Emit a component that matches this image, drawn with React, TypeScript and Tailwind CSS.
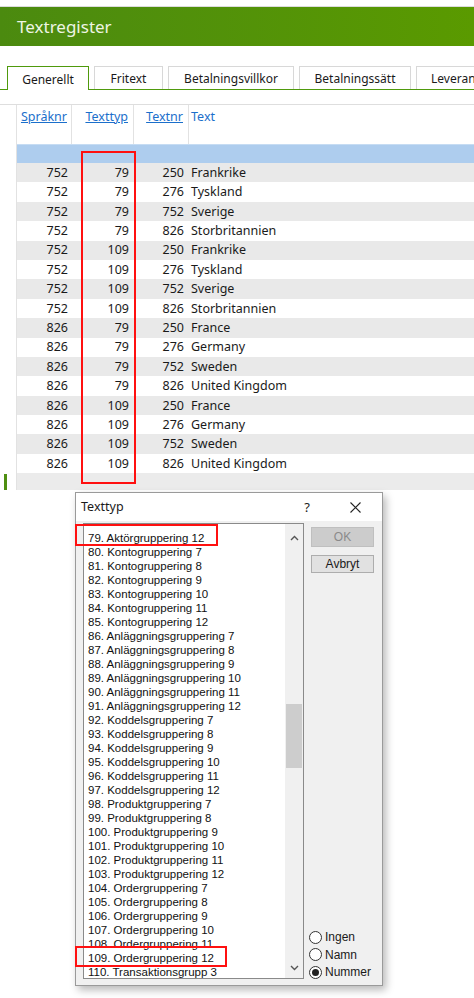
import React from 'react';

const rows: [number, number, number, string][] = [
  [752, 79, 250, 'Frankrike'],
  [752, 79, 276, 'Tyskland'],
  [752, 79, 752, 'Sverige'],
  [752, 79, 826, 'Storbritannien'],
  [752, 109, 250, 'Frankrike'],
  [752, 109, 276, 'Tyskland'],
  [752, 109, 752, 'Sverige'],
  [752, 109, 826, 'Storbritannien'],
  [826, 79, 250, 'France'],
  [826, 79, 276, 'Germany'],
  [826, 79, 752, 'Sweden'],
  [826, 79, 826, 'United Kingdom'],
  [826, 109, 250, 'France'],
  [826, 109, 276, 'Germany'],
  [826, 109, 752, 'Sweden'],
  [826, 109, 826, 'United Kingdom'],
];

const items = [
  '79. Aktörgruppering 12',
  '80. Kontogruppering 7',
  '81. Kontogruppering 8',
  '82. Kontogruppering 9',
  '83. Kontogruppering 10',
  '84. Kontogruppering 11',
  '85. Kontogruppering 12',
  '86. Anläggningsgruppering 7',
  '87. Anläggningsgruppering 8',
  '88. Anläggningsgruppering 9',
  '89. Anläggningsgruppering 10',
  '90. Anläggningsgruppering 11',
  '91. Anläggningsgruppering 12',
  '92. Koddelsgruppering 7',
  '93. Koddelsgruppering 8',
  '94. Koddelsgruppering 9',
  '95. Koddelsgruppering 10',
  '96. Koddelsgruppering 11',
  '97. Koddelsgruppering 12',
  '98. Produktgruppering 7',
  '99. Produktgruppering 8',
  '100. Produktgruppering 9',
  '101. Produktgruppering 10',
  '102. Produktgruppering 11',
  '103. Produktgruppering 12',
  '104. Ordergruppering 7',
  '105. Ordergruppering 8',
  '106. Ordergruppering 9',
  '107. Ordergruppering 10',
  '108. Ordergruppering 11',
  '109. Ordergruppering 12',
  '110. Transaktionsgrupp 3',
];

const tabs = ['Fritext', 'Betalningsvillkor', 'Betalningssätt', 'Leveran'];
const tabWidths = ['w-[69px]', 'w-[126px]', 'w-[112px]', 'w-[80px]'];

function Radio({ label, checked }: { label: string; checked?: boolean }) {
  return (
    <div className="flex items-center gap-[3px] h-[17.5px]">
      <div className="w-[13px] h-[13px] rounded-full border border-[#333] bg-white flex items-center justify-center">
        {checked && <div className="w-[7px] h-[7px] rounded-full bg-[#222]" />}
      </div>
      <span>{label}</span>
    </div>
  );
}

export default function App() {
  return (
    <div className="relative w-[474px] h-[998px] overflow-hidden bg-white text-[#1a1a1a] font-['Noto_Sans',sans-serif]">
      {/* Header */}
      <div className="h-[7px] border-b border-[#dcdcdc]" />
      <div className="h-[39px] flex items-center pl-[17px] bg-gradient-to-r from-[#4b8a0f] to-[#5a9a00] text-[#eef5e4] text-[17px]">
        Textregister
      </div>

      {/* Tabs */}
      <div className="mt-[20px] flex items-end h-[24px] text-[12px] overflow-hidden">
        <div className="w-[7px] shrink-0 h-full border-b border-[#4f9a0c]" />
        <div className="w-[82px] shrink-0 h-[25px] -mb-px pt-[2px] border border-b-0 border-[#4f9a0c] bg-white flex items-center justify-center">
          Generellt
        </div>
        <div className="flex-1 min-w-0 flex items-end h-full border-b border-[#4f9a0c] gap-[5px] pl-[5px]">
          {tabs.map((t, i) => (
            <div
              key={t}
              className={`${tabWidths[i]} shrink-0 h-full pt-[2px] border border-b-0 border-[#d8d8d8] flex items-center ${i === 3 ? 'justify-start pl-[14px]' : 'justify-center'}`}
            >
              {t}
            </div>
          ))}
        </div>
      </div>

      {/* Grid */}
      <div className="mt-[14px] border-t border-[#dedede] text-[12.5px]">
        <div className="flex h-[39px]">
          <div className="w-[17px] border-r border-[#e2e2e2]" />
          <div className="w-[55px] border-r border-[#e2e2e2] text-right pr-[4px] pt-[3px] text-[#1b6fcb] underline">Språknr</div>
          <div className="w-[62px] border-r border-[#e2e2e2] text-right pr-[5px] pt-[3px] text-[#1b6fcb] underline">Texttyp</div>
          <div className="w-[55px] border-r border-[#e2e2e2] text-right pr-[5px] pt-[3px] text-[#1b6fcb] underline">Textnr</div>
          <div className="flex-1 pl-[2px] pt-[3px] text-[#1b6fcb]">Text</div>
        </div>
        <div className="flex h-[19px]">
          <div className="w-[17px] border-r border-[#e2e2e2]" />
          <div className="flex-1 bg-[#aecdee] border-t border-[#c6dcf3]" />
        </div>
        {rows.map((r, i) => (
          <div key={i} className="flex h-[19.4px] items-center">
            <div className="w-[17px] h-full border-r border-[#e2e2e2] bg-white" />
            <div className={`flex-1 h-full flex items-center pt-px ${i % 2 === 0 ? 'bg-[#e9e9e9]' : 'bg-white'}`}>
              <div className="w-[55px] text-right pr-[4px]">{r[0]}</div>
              <div className="w-[62px] text-right pr-[5px]">{r[1]}</div>
              <div className="w-[55px] text-right pr-[5px]">{r[2]}</div>
              <div className="flex-1 pl-[2px]">{r[3]}</div>
            </div>
          </div>
        ))}
        <div className="flex h-[17px] bg-[#ebebeb]">
          <div className="w-[17px] bg-white border-r border-[#e2e2e2] pl-[4px] pt-[1px]">
            <div className="w-[3px] h-full bg-[#4f8f12]" />
          </div>
        </div>
      </div>

      {/* Annotation on grid */}
      <div className="absolute left-[81px] top-[151px] w-[55px] h-[333px] border-2 border-[#ff1010]" />

      {/* Dialog */}
      <div className="absolute left-[75px] top-[492px] w-[308px] h-[494px] border border-[#9a9a9a] bg-[#f0f0f0] shadow-[3px_4px_8px_rgba(0,0,0,0.28)] flex flex-col font-['Liberation_Sans',sans-serif]">
        <div className="h-[28px] shrink-0 bg-white flex items-start pt-[5px] pl-[5px] pr-[21px] text-[12.5px] font-['Noto_Sans',sans-serif]">
          <span className="flex-1">Texttyp</span>
          <span className="mr-[40px] text-[13px]">?</span>
          <svg className="mt-[4px]" width="11" height="11" viewBox="0 0 11 11" stroke="#222" strokeWidth="1.1">
            <path d="M0.5 0.5 L10.5 10.5 M10.5 0.5 L0.5 10.5" />
          </svg>
        </div>
        <div className="flex-1 min-h-0 flex pl-[7px] pt-[2px] pb-[6px] pr-[8px] gap-[7px]">
          <div className="w-[221px] border border-[#8a8a8a] bg-white flex text-[11.5px] overflow-hidden">
            <div className="flex-1 pl-[4px] pt-[7px] leading-[14px] text-[#111]">
              {items.map((it) => (
                <div key={it} className="h-[14px] whitespace-nowrap">{it}</div>
              ))}
            </div>
            <div className="w-[18px] bg-[#f0f0f0] flex flex-col items-center">
              <svg className="mt-[11px]" width="9" height="6" viewBox="0 0 9 6" fill="none" stroke="#555" strokeWidth="1.4">
                <path d="M1 5 L4.5 1.5 L8 5" />
              </svg>
              <div className="mt-[163px] w-[16px] h-[64px] bg-[#cdcdcd]" />
              <div className="flex-1" />
              <svg className="mb-[7px]" width="9" height="6" viewBox="0 0 9 6" fill="none" stroke="#555" strokeWidth="1.4">
                <path d="M1 1 L4.5 4.5 L8 1" />
              </svg>
            </div>
          </div>
          <div className="flex-1 flex flex-col text-[12px]">
            <div className="mt-[4px] h-[20px] bg-[#cccccc] border border-[#bfbfbf] text-[#8a8a8a] flex items-center justify-center">OK</div>
            <div className="mt-[8px] h-[18px] bg-[#e1e1e1] border border-[#adadad] flex items-center justify-center">Avbryt</div>
            <div className="flex-1" />
            <div className="mb-[-2px] -ml-[2px]">
              <Radio label="Ingen" />
              <Radio label="Namn" />
              <Radio label="Nummer" checked />
            </div>
          </div>
        </div>
      </div>

      {/* Annotations on dialog */}
      <div className="absolute left-[75px] top-[524px] w-[143px] h-[22px] border-2 border-[#ff1010]" />
      <div className="absolute left-[75px] top-[946px] w-[152px] h-[21px] border-2 border-[#ff1010]" />
    </div>
  );
}
